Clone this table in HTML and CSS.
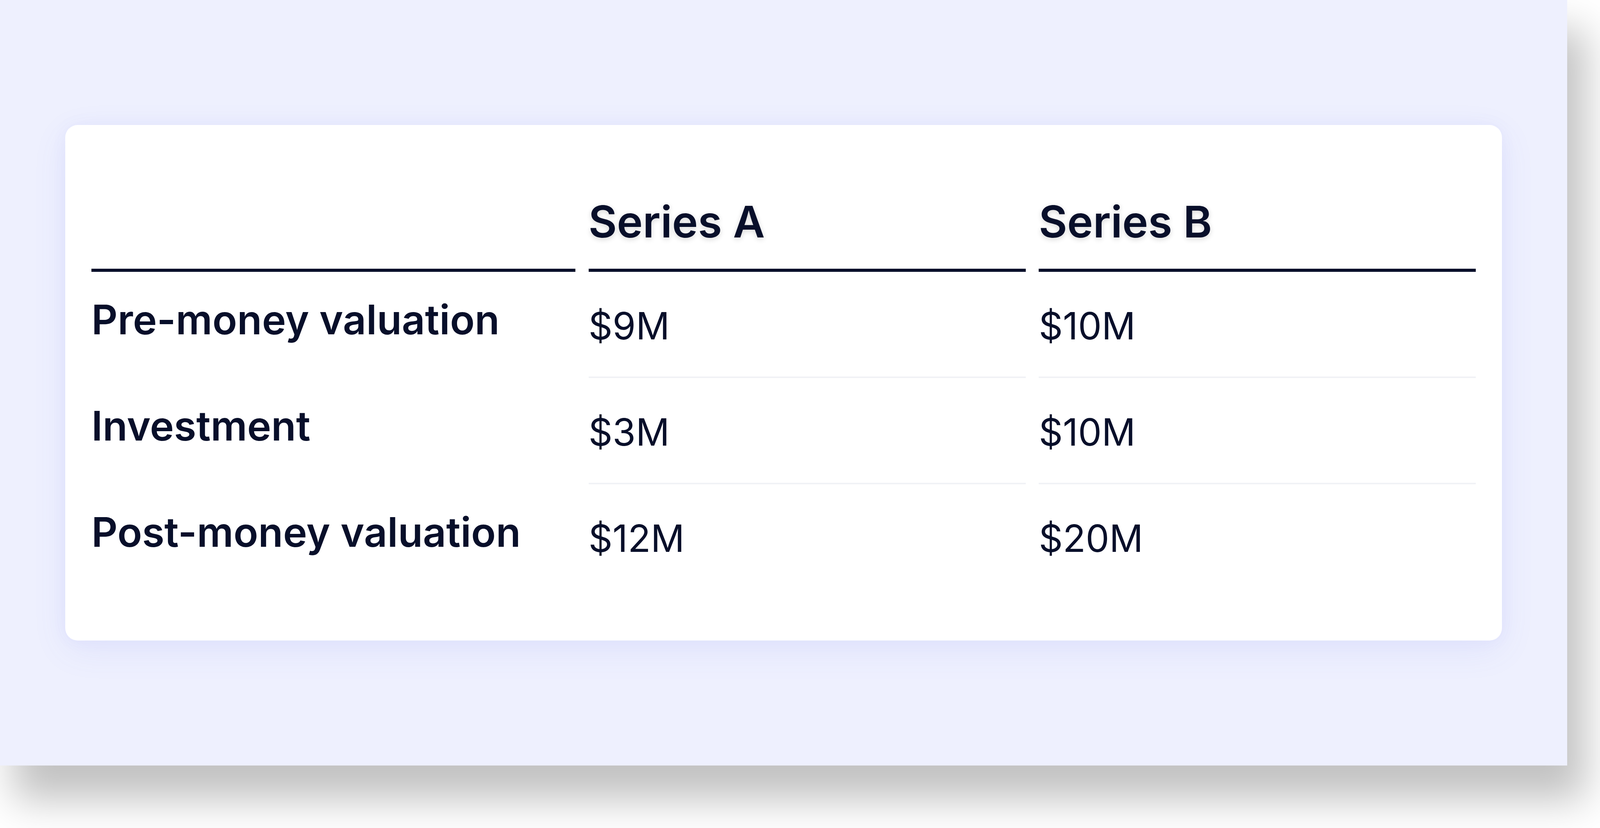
FILE: index.html
```html
<!DOCTYPE html>
<html lang="en">
<head>
<meta charset="utf-8">
<title>Funding rounds</title>
<link rel="stylesheet" href="styles.css">
</head>
<body>
  <div class="frame">
    <div class="card">
      <div class="grid">
        <div class="head"></div>
        <div class="head"><span class="head-text">Series A</span></div>
        <div class="head"><span class="head-text">Series B</span></div>

        <div class="label">Pre-money valuation</div>
        <div class="value">$9M</div>
        <div class="value">$10M</div>

        <div class="label">Investment</div>
        <div class="value">$3M</div>
        <div class="value">$10M</div>

        <div class="label">Post-money valuation</div>
        <div class="value last">$12M</div>
        <div class="value last">$20M</div>
      </div>
    </div>
  </div>
</body>
</html>
```

FILE: styles.css
```css
html, body {
  margin: 0;
  padding: 0;
  background: #ffffff;
}

html {
  overflow: hidden;
}

body {
  min-height: 100vh;
  font-family: Inter, "Noto Sans", "Liberation Sans", sans-serif;
  color: #080f2a;
}

.frame {
  width: calc(100% - 2.04vw);
  height: 1960px;
  box-sizing: border-box;
  padding: 320px 4.082vw;
  background: #eef0fe;
  box-shadow: 1vw 82px 96px 6px rgba(0, 0, 0, 0.245);
}

.card {
  background: #ffffff;
  border-radius: 32px;
  padding: 128px 1.633vw;
  box-shadow: 0 24px 90px rgba(90, 100, 230, 0.09), 0 0 40px rgba(90, 100, 230, 0.05);
}

.grid {
  display: grid;
  grid-template-columns: minmax(max-content, 1512fr) 2572fr 2572fr;
  column-gap: 0.8163vw;
}

.head {
  padding: 39px 0 41px;
  line-height: 160px;
  height: 160px;
  font-size: 112px;
  font-weight: 600;
  border-bottom: 8px solid #080f2a;
  white-space: nowrap;
}

.head-text {
  text-shadow: 0 4px 14px rgba(0, 0, 0, 0.16);
}

.label {
  padding: 50px 140px 0 0;
  font-size: 104px;
  line-height: 144px;
  font-weight: 600;
  white-space: nowrap;
}

.value {
  padding: 66px 0 58px;
  font-size: 96px;
  line-height: 144px;
  font-weight: 400;
  border-bottom: 4px solid #f1f2f6;
  white-space: nowrap;
}

.value.last {
  border-bottom: none;
  padding-bottom: 62px;
}
```
